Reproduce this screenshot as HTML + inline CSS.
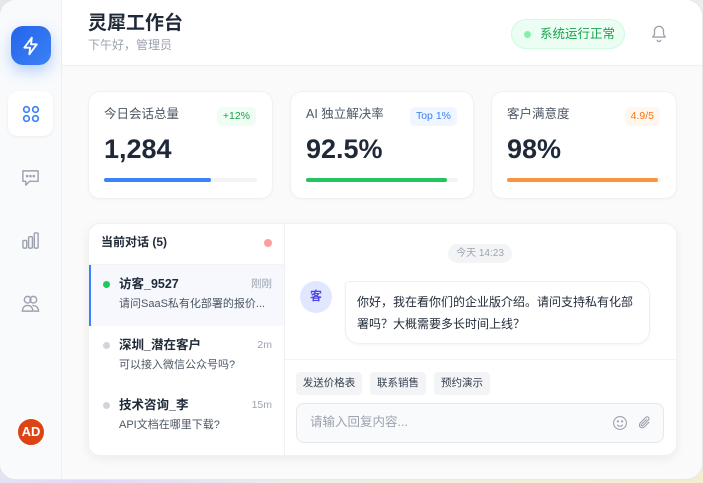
<!DOCTYPE html>
<html><head><meta charset="utf-8"><style>
*{box-sizing:border-box;margin:0;padding:0}
body{width:703px;height:483px;overflow:hidden;font-family:"Liberation Sans","Noto Sans CJK SC",sans-serif;line-height:1.15;background:linear-gradient(135deg,#e5e7eb 0%,#eceef2 50%,#f3eed0 100%);position:relative}
.bgp{position:absolute;left:0;bottom:0;width:300px;height:120px;background:radial-gradient(ellipse at 30% 100%,#e2d8f5,transparent 70%)}
.win{position:absolute;left:0;top:0;width:702px;height:479px;border-radius:16px;overflow:hidden;background:#fafafa;box-shadow:0 0 0 1px #e5e7eb}
.side{position:absolute;left:0;top:0;width:62px;height:100%;background:#f8fafc;border-right:1px solid #eef0f3}
.logo{position:absolute;left:11px;top:26px;width:40px;height:39px;border-radius:12px;background:linear-gradient(135deg,#2563eb,#3b82f6);box-shadow:0 6px 14px rgba(59,130,246,.35);display:flex;align-items:center;justify-content:center}
.nav{position:absolute;left:8px;top:91px;width:45px;height:45px;background:#fff;border-radius:10px;box-shadow:0 1px 3px rgba(0,0,0,.06);display:flex;align-items:center;justify-content:center}
.ic{position:absolute;left:21px}
.ad{position:absolute;left:17px;top:418px;width:28px;height:28px;border-radius:50%;background:#dc4414;color:#fff;font-size:13px;font-weight:bold;display:flex;align-items:center;justify-content:center;border:1px solid #fff}
.head{position:absolute;left:62px;top:0;right:0;height:66px;background:#fff;border-bottom:1px solid #eef0f3}
.t1{position:absolute;left:26px;top:13px;font-size:19px;font-weight:bold;color:#1f2937}
.t2{position:absolute;left:26px;top:39px;font-size:12px;color:#9ca3af}
.stat{position:absolute;left:449px;top:19px;width:114px;height:30px;border-radius:15px;background:#ecfdf3;border:1px solid #d1fadf;color:#16a34a;font-size:12.5px;display:flex;align-items:center;padding-left:12px}
.stat i{width:7px;height:7px;border-radius:50%;background:#86efac;margin-right:9px}
.card{position:absolute;top:91px;height:108px;background:#fff;border-radius:12px;border:1px solid #f0f1f3;box-shadow:0 1px 3px rgba(0,0,0,.03)}
.card .l{position:absolute;left:15px;top:15px;font-size:12.5px;color:#4b5563}
.card .b{position:absolute;right:16px;top:15px;font-size:10.5px;height:19px;line-height:19px;padding:0 6px;border-radius:5px}
.card .v{position:absolute;left:15px;top:42px;font-size:27px;font-weight:bold;color:#1f2937}
.card .bar{position:absolute;left:15px;right:15px;top:86px;height:4px;border-radius:2px;background:#f1f3f5}
.card .bar div{height:4px;border-radius:2px}
.chat{position:absolute;left:88px;top:223px;width:589px;height:233px;background:#fff;border-radius:12px;border:1px solid #f0f1f3;box-shadow:0 3px 10px rgba(0,0,0,.06);overflow:hidden}
.list{position:absolute;left:0;top:0;width:196px;height:100%;border-right:1px solid #eef0f3}
.lh{height:41px;border-bottom:1px solid #f1f3f5;font-size:12px;font-weight:bold;color:#1f2937;padding:12px 0 0 12px;position:relative}
.lh i{position:absolute;right:12px;top:15px;width:8px;height:8px;border-radius:50%;background:#f8a0a0}
.it{position:relative;height:60px}
.it.a{background:#f6f8fe;border-left:2px solid #3b82f6;height:61px}
.it .d{position:absolute;left:14px;top:16px;width:7px;height:7px;border-radius:50%;background:#d1d5db}
.it .n{position:absolute;left:30px;top:12px;font-size:12.5px;font-weight:bold;color:#1f2937}
.it .tm{position:absolute;right:12px;top:13px;font-size:10.5px;color:#9ca3af}
.it .m{position:absolute;left:30px;top:33px;font-size:11px;color:#4b5563}
.ts{position:absolute;left:359px;top:20px;width:64px;height:19px;border-radius:10px;background:#f3f4f6;color:#9ca3af;font-size:10px;display:flex;align-items:center;justify-content:center}
.av{position:absolute;left:211px;top:57px;width:32px;height:32px;border-radius:50%;background:#e0e7ff;color:#4f46e5;font-size:12px;font-weight:bold;display:flex;align-items:center;justify-content:center}
.bub{position:absolute;left:256px;top:57px;width:305px;height:63px;border:1px solid #eef0f3;border-radius:14px;border-top-left-radius:4px;box-shadow:0 1px 3px rgba(0,0,0,.05);padding:9px 11px;font-size:12px;line-height:22px;color:#1f2937}
.div{position:absolute;left:196px;right:0;top:135px;border-top:1px solid #f1f3f5}
.qb{position:absolute;top:148px;height:23px;border-radius:4px;background:#f3f4f6;font-size:10.5px;color:#374151;display:flex;align-items:center;justify-content:center}
.inp{position:absolute;left:207px;top:179px;width:368px;height:40px;border:1px solid #e5e7eb;border-radius:8px;background:#f9fafb;font-size:12.5px;color:#9ca3af;padding:11px 13px}
</style></head><body><div class="bgp"></div>
<div class="win">
<div class="side">
<div class="logo"><svg width="20" height="20" viewBox="0 0 24 24" fill="none" stroke="#fff" stroke-width="2.2" stroke-linejoin="round"><path d="M13 2L4 14h7l-1 8 9-12h-7z"/></svg></div>
<div class="nav"><svg width="18" height="18" viewBox="0 0 18 18" fill="none" stroke="#3b82f6" stroke-width="1.7"><circle cx="4.5" cy="4.5" r="2.8"/><circle cx="13.5" cy="4.5" r="2.8"/><circle cx="4.5" cy="13.5" r="2.8"/><circle cx="13.5" cy="13.5" r="2.8"/></svg></div>
<svg class="ic" style="top:168px" width="19" height="19" viewBox="0 0 20 20" fill="none" stroke="#9ca3af" stroke-width="1.5" stroke-linejoin="round"><path d="M2 3h16v11H9l-4 4v-4H2z"/><circle cx="6.5" cy="8.5" r=".6" fill="#9ca3af"/><circle cx="10" cy="8.5" r=".6" fill="#9ca3af"/><circle cx="13.5" cy="8.5" r=".6" fill="#9ca3af"/></svg>
<svg class="ic" style="top:231px" width="19" height="19" viewBox="0 0 20 20" fill="none" stroke="#9ca3af" stroke-width="1.5" stroke-linejoin="round"><rect x="2" y="10" width="4" height="8" rx="1"/><rect x="8" y="6" width="4" height="12" rx="1"/><rect x="14" y="2" width="4" height="16" rx="1"/></svg>
<svg class="ic" style="top:294px" width="19" height="19" viewBox="0 0 20 20" fill="none" stroke="#9ca3af" stroke-width="1.5"><circle cx="7" cy="6" r="3.5"/><circle cx="13" cy="6" r="3.5"/><path d="M1.5 18c0-4 2.5-6 5.5-6s5.5 2 5.5 6zM12 12c3 0 6.5 1.5 6.5 6h-5"/></svg>
<div class="ad">AD</div>
</div>
<div class="head">
<div class="t1">灵犀工作台</div><div class="t2">下午好，管理员</div>
<div class="stat"><i></i>系统运行正常</div>
<svg style="position:absolute;left:588px;top:24px" width="18" height="19" viewBox="0 0 20 20" fill="none" stroke="#9ca3af" stroke-width="1.5" stroke-linejoin="round"><path d="M10 2a5 5 0 0 0-5 5v4l-2 3h14l-2-3V7a5 5 0 0 0-5-5zM8 17a2 2 0 0 0 4 0"/></svg>
</div>
<div class="card" style="left:88px;width:185px"><div class="l">今日会话总量</div><div class="b" style="background:#f0fdf4;color:#16a34a">+12%</div><div class="v">1,284</div><div class="bar"><div style="width:70%;background:#3b82f6"></div></div></div>
<div class="card" style="left:290px;width:184px"><div class="l">AI 独立解决率</div><div class="b" style="background:#eff6ff;color:#3b82f6">Top 1%</div><div class="v">92.5%</div><div class="bar"><div style="width:92.5%;background:#22c55e"></div></div></div>
<div class="card" style="left:491px;width:186px"><div class="l">客户满意度</div><div class="b" style="background:#fff7ed;color:#f97316">4.9/5</div><div class="v">98%</div><div class="bar"><div style="width:98%;background:#fb923c"></div></div></div>
<div class="chat">
<div class="list">
<div class="lh">当前对话 (5)<i></i></div>
<div class="it a"><div class="d" style="background:#22c55e;left:12px"></div><div class="n" style="left:28px">访客_9527</div><div class="tm">刚刚</div><div class="m" style="left:28px">请问SaaS私有化部署的报价...</div></div>
<div class="it"><div class="d"></div><div class="n">深圳_潜在客户</div><div class="tm">2m</div><div class="m">可以接入微信公众号吗?</div></div>
<div class="it"><div class="d"></div><div class="n">技术咨询_李</div><div class="tm">15m</div><div class="m">API文档在哪里下载?</div></div>
</div>
<div class="ts">今天 14:23</div>
<div class="av">客</div>
<div class="bub">你好，我在看你们的企业版介绍。请问支持私有化部署吗？大概需要多长时间上线？</div>
<div class="div"></div>
<div class="qb" style="left:207px;width:66px">发送价格表</div>
<div class="qb" style="left:281px;width:56px">联系销售</div>
<div class="qb" style="left:345px;width:56px">预约演示</div>
<div class="inp">请输入回复内容...
<svg style="position:absolute;left:315px;top:11px" width="16" height="16" viewBox="0 0 20 20" fill="none" stroke="#9ca3af" stroke-width="1.4"><circle cx="10" cy="10" r="8"/><path d="M6.5 12a4 4 0 0 0 7 0"/><circle cx="7.3" cy="8" r=".7" fill="#9ca3af"/><circle cx="12.7" cy="8" r=".7" fill="#9ca3af"/></svg>
<svg style="position:absolute;left:340px;top:11px" width="16" height="16" viewBox="0 0 20 20" fill="none" stroke="#9ca3af" stroke-width="1.4" stroke-linecap="round"><path d="M15 9l-6 6a3.5 3.5 0 0 1-5-5l7-7a2.3 2.3 0 0 1 3.3 3.3l-7 7a1.2 1.2 0 0 1-1.7-1.7L12 5.5"/></svg>
</div>
</div>
</div>
</body></html>
